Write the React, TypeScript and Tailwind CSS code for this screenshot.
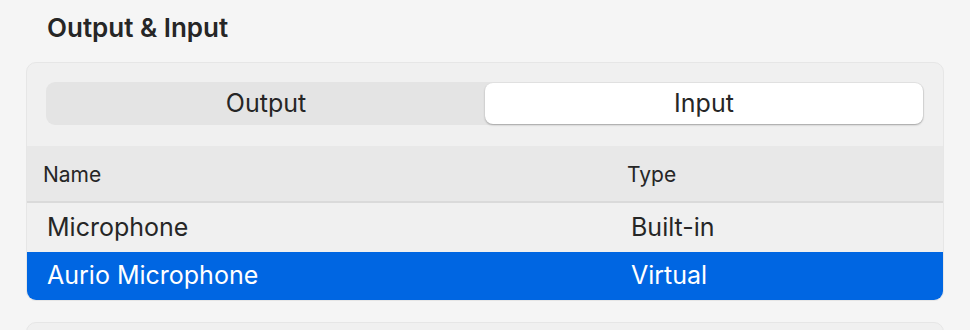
import { useState } from 'react';

const devices = [
  { name: 'Microphone', type: 'Built-in' },
  { name: 'Aurio Microphone', type: 'Virtual' },
];

export default function App() {
  const [tab, setTab] = useState<'output' | 'input'>('input');
  const [selected, setSelected] = useState(1);

  return (
    <div
      className="h-[330px] w-[970px] overflow-hidden bg-[#f5f5f5] text-[#262626]"
      style={{ fontFamily: 'Inter, "Noto Sans", sans-serif' }}
    >
      <div className="px-[26px] pt-[12px]">
        <h1 className="pl-[21px] text-[26px] font-semibold leading-[32px] text-[#262626]">Output &amp; Input</h1>

        {/* card */}
        <div className="mt-[18px] overflow-hidden rounded-[10px] border border-[#e6e6e6] bg-[#f0f0f0]">
          {/* segmented control */}
          <div className="px-[19px] pb-[21px] pt-[19px]">
            <div className="flex h-[43px] rounded-[9px] bg-[#e4e4e4] p-[1px]">
              <button
                onClick={() => setTab('output')}
                className={
                  tab === 'output'
                    ? 'flex-1 rounded-[8px] bg-white text-[25px] shadow-[0_1px_2px_rgba(0,0,0,0.3)]'
                    : 'flex-1 rounded-[8px] text-[25px]'
                }
              >
                Output
              </button>
              <button
                onClick={() => setTab('input')}
                className={
                  tab === 'input'
                    ? 'flex-1 rounded-[8px] bg-white text-[25px] shadow-[0_1px_2px_rgba(0,0,0,0.3)]'
                    : 'flex-1 rounded-[8px] text-[25px]'
                }
              >
                Input
              </button>
            </div>
          </div>

          {/* table */}
          <div className="flex h-[57px] items-center border-b-2 border-[#dadada] bg-[#e8e8e8] pt-[3px] text-[21px]">
            <div className="w-[600px] pl-[16px]">Name</div>
            <div>Type</div>
          </div>
          {devices.map((d, i) => (
            <div
              key={d.name}
              onClick={() => setSelected(i)}
              className={
                selected === i
                  ? 'flex h-[48px] items-center bg-[#0066e2] text-[25px] text-white'
                  : 'flex h-[49px] items-center text-[25px]'
              }
            >
              <div className="w-[604px] pl-[20px]">{d.name}</div>
              <div>{d.type}</div>
            </div>
          ))}
        </div>

        <div className="mt-[21px] h-[40px] rounded-[10px] border border-[#e6e6e6] bg-[#f0f0f0]" />
      </div>
    </div>
  );
}
